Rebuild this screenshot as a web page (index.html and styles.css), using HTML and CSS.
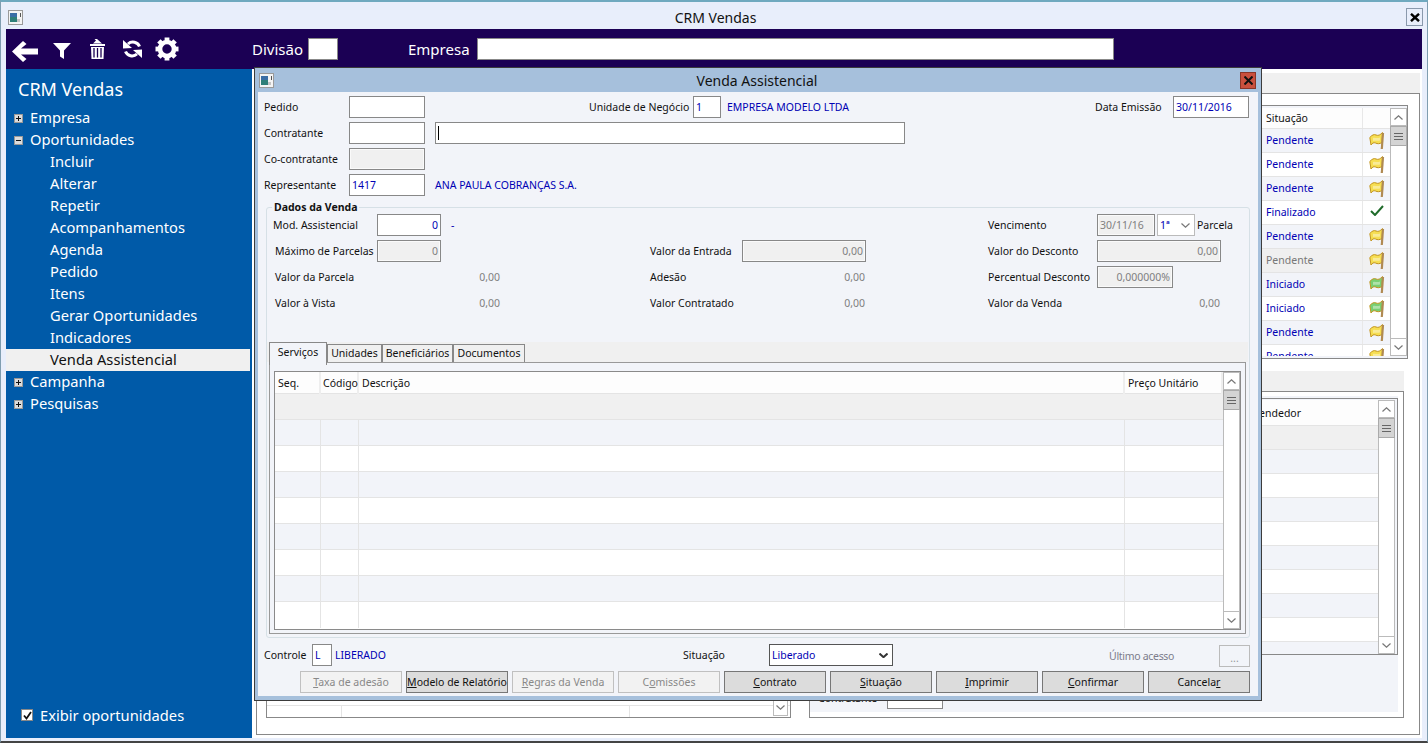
FILE: index.html
```html
<!DOCTYPE html>
<html lang="pt-BR">
<head>
    <meta charset="UTF-8">
    <title>CRM Vendas</title>
    <link rel="stylesheet" href="styles.css">
</head>
<body>

    <!-- Shared icons -->
    <svg class="defs" width="0" height="0">
        <symbol id="win-icon" viewBox="0 0 15 15">
            <rect x="0.5" y="0.5" width="14" height="14" fill="#f4f4f4" stroke="#9a9a9a"/>
            <rect x="2" y="3" width="7" height="9" fill="#2f7f78"/>
            <rect x="2" y="3" width="7" height="4" fill="#3a6ea5"/>
            <rect x="9" y="9" width="3" height="3" fill="#c4c4c4"/>
            <rect x="12" y="3" width="1" height="4" fill="#555"/>
        </symbol>
        <symbol id="flag" viewBox="0 0 16 18">
            <path d="M0.8 5.5 C3 3 5 2 7 3 C9.5 4 11 3 13.5 0.5 L13 10.5 C10.5 12 8.5 12 6.5 11 C4.5 10.3 3.5 11 2 13 Z" fill="currentColor" stroke="#c2941f"/>
            <path d="M4 6 C6 5 8 7 11 5.5 L11 8.5 C8 9.5 6 8 4 9 Z" fill="#fff" opacity="0.4"/>
            <path d="M14 1 L12.8 17" stroke="#b08a52" stroke-width="2.2"/>
        </symbol>
        <symbol id="up" viewBox="0 0 9 5">
            <path d="M0.5 4.5 L4.5 0.8 L8.5 4.5" fill="none" stroke="#777" stroke-width="1.2"/>
        </symbol>
        <symbol id="down" viewBox="0 0 9 5">
            <path d="M0.5 0.5 L4.5 4.2 L8.5 0.5" fill="none" stroke="#777" stroke-width="1.2"/>
        </symbol>
        <symbol id="down-bold" viewBox="0 0 9 5">
            <path d="M0.5 0.5 L4.5 4.2 L8.5 0.5" fill="none" stroke="#333" stroke-width="2"/>
        </symbol>
    </svg>

    <div class="app">
        <!-- Window title -->
        <div class="titlebar">
            <svg class="win-icon"><use href="#win-icon"/></svg>
            <span class="titlebar-text">CRM Vendas</span>
            <div class="close-plain">
                <svg width="10" height="9" viewBox="0 0 10 9"><path d="M1 0.8 L9 8.2 M9 0.8 L1 8.2" stroke="#000" stroke-width="2.4"/></svg>
            </div>
        </div>

        <!-- Toolbar -->
        <div class="toolbar">
            <div class="tool-icons">
                <svg class="ic-back" width="26" height="21" viewBox="0 0 26 21"><path d="M11 0 L14.5 3 L9 7.5 L26 7.5 L26 13.5 L9 13.5 L14.5 18 L11 21 L0 10.5 Z" fill="#fff"/></svg>
                <svg class="ic-filter" width="18" height="16" viewBox="0 0 18 16"><path d="M0 0 L18 0 L11 7.5 L11 16 L7 13.5 L7 7.5 Z" fill="#fff"/></svg>
                <svg class="ic-trash" width="15" height="20" viewBox="0 0 15 20">
                    <path d="M0 5 L15 5 L15 7 L0 7 Z" fill="#fff"/>
                    <path d="M3 4.5 L6 1.5 L4.5 0 L7 0 L12 4.5 Z" fill="#fff"/>
                    <path d="M1 8 L14 8 L13.5 20 L1.5 20 Z" fill="#fff"/>
                    <path d="M4 9 L4 18.5 M7.5 9 L7.5 18.5 M11 9 L11 18.5" stroke="#1b0054" stroke-width="1.3"/>
                </svg>
                <svg class="ic-refresh" width="19" height="18" viewBox="0 0 19 18">
                    <path d="M16.5 6.5 A7 6.5 0 0 0 5 4" fill="none" stroke="#fff" stroke-width="3"/>
                    <path d="M0 0 L9 8 L0 8.5 Z" fill="#fff"/>
                    <path d="M2.5 11.5 A7 6.5 0 0 0 14 14" fill="none" stroke="#fff" stroke-width="3"/>
                    <path d="M19 18 L10 10 L19 9.5 Z" fill="#fff"/>
                </svg>
                <svg class="ic-gear" width="24" height="24" viewBox="0 0 24 24">
                    <circle cx="12" cy="12" r="7" fill="none" stroke="#fff" stroke-width="4.6"/>
                    <g fill="#fff">
                        <rect x="9.6" y="0.5" width="4.8" height="5"/>
                        <rect x="9.6" y="18.5" width="4.8" height="5"/>
                        <rect x="0.5" y="9.6" width="5" height="4.8"/>
                        <rect x="18.5" y="9.6" width="5" height="4.8"/>
                        <rect x="9.6" y="0.5" width="4.8" height="5" transform="rotate(45 12 12)"/>
                        <rect x="9.6" y="18.5" width="4.8" height="5" transform="rotate(45 12 12)"/>
                        <rect x="0.5" y="9.6" width="5" height="4.8" transform="rotate(45 12 12)"/>
                        <rect x="18.5" y="9.6" width="5" height="4.8" transform="rotate(45 12 12)"/>
                    </g>
                </svg>
            </div>
            <span class="tool-label">Divisão</span>
            <div class="tool-input tool-input-div"></div>
            <span class="tool-label tool-label-emp">Empresa</span>
            <div class="tool-input tool-input-emp"></div>
        </div>

        <div class="workspace">
            <!-- Side menu -->
            <nav class="sidebar">
                <div class="side-title">CRM Vendas</div>
                <div class="menu-item"><span class="exp plus"></span>Empresa</div>
                <div class="menu-item"><span class="exp"></span>Oportunidades</div>
                <div class="menu-item sub">Incluir</div>
                <div class="menu-item sub">Alterar</div>
                <div class="menu-item sub">Repetir</div>
                <div class="menu-item sub">Acompanhamentos</div>
                <div class="menu-item sub">Agenda</div>
                <div class="menu-item sub">Pedido</div>
                <div class="menu-item sub">Itens</div>
                <div class="menu-item sub">Gerar Oportunidades</div>
                <div class="menu-item sub">Indicadores</div>
                <div class="menu-item sub active">Venda Assistencial</div>
                <div class="menu-item"><span class="exp plus"></span>Campanha</div>
                <div class="menu-item"><span class="exp plus"></span>Pesquisas</div>
                <label class="side-check">
                    <span class="checkbox">
                        <svg width="9" height="9" viewBox="0 0 9 9"><path d="M1 4.5 L3.5 7.5 L8 1" fill="none" stroke="#111" stroke-width="1.8"/></svg>
                    </span>
                    Exibir oportunidades
                </label>
            </nav>

            <!-- Screen behind the dialog -->
            <main class="main">
                <div class="band"></div>
                <div class="main-panel">
                    <div class="list list-top">
                        <div class="list-body">
                            <div class="lrow head"><span class="c-sit">Situação</span><span class="c-flag"></span></div>
                            <div class="lrow alt"><span class="c-sit">Pendente</span><span class="c-flag"><svg class="flag yellow"><use href="#flag"/></svg></span></div>
                            <div class="lrow"><span class="c-sit">Pendente</span><span class="c-flag"><svg class="flag yellow"><use href="#flag"/></svg></span></div>
                            <div class="lrow alt"><span class="c-sit">Pendente</span><span class="c-flag"><svg class="flag yellow"><use href="#flag"/></svg></span></div>
                            <div class="lrow"><span class="c-sit">Finalizado</span><span class="c-flag"><svg class="check" width="14" height="11" viewBox="0 0 14 11"><path d="M1 6 L5 10 L13 1" fill="none" stroke="#1f6b2a" stroke-width="2"/></svg></span></div>
                            <div class="lrow alt"><span class="c-sit">Pendente</span><span class="c-flag"><svg class="flag yellow"><use href="#flag"/></svg></span></div>
                            <div class="lrow sel"><span class="c-sit">Pendente</span><span class="c-flag"><svg class="flag yellow"><use href="#flag"/></svg></span></div>
                            <div class="lrow alt"><span class="c-sit">Iniciado</span><span class="c-flag"><svg class="flag green"><use href="#flag"/></svg></span></div>
                            <div class="lrow"><span class="c-sit">Iniciado</span><span class="c-flag"><svg class="flag green"><use href="#flag"/></svg></span></div>
                            <div class="lrow alt"><span class="c-sit">Pendente</span><span class="c-flag"><svg class="flag yellow"><use href="#flag"/></svg></span></div>
                            <div class="lrow"><span class="c-sit">Pendente</span><span class="c-flag"><svg class="flag yellow"><use href="#flag"/></svg></span></div>
                        </div>
                        <div class="scroll">
                            <div class="sb-btn"><svg width="9" height="5"><use href="#up"/></svg></div>
                            <div class="sb-thumb"><i></i><i></i><i></i></div>
                            <div class="sb-track"></div>
                            <div class="sb-btn"><svg width="9" height="5"><use href="#down"/></svg></div>
                        </div>
                    </div>
                    <div class="lower">
                        <div class="lower-left">
                            <div class="band"></div>
                            <div class="sub-panel sub-panel-left">
                                <div class="left-cols">
                                    <span></span><span></span><span></span>
                                </div>
                                <div class="corner-btn"><svg width="9" height="5"><use href="#down"/></svg></div>
                            </div>
                        </div>
                        <div class="lower-right">
                            <div class="band"></div>
                            <div class="sub-panel">
                                <div class="sub-fill">
                                    <div class="list list-low">
                                        <div class="list-body">
                                            <div class="lrow2 head"><span class="c-vend">Vendedor</span></div>
                                            <div class="lrow2 sel"></div>
                                            <div class="lrow2 alt"></div>
                                            <div class="lrow2"></div>
                                            <div class="lrow2 alt"></div>
                                            <div class="lrow2"></div>
                                            <div class="lrow2 alt"></div>
                                            <div class="lrow2"></div>
                                            <div class="lrow2 alt"></div>
                                            <div class="lrow2"></div>
                                            <div class="lrow2 alt"></div>
                                        </div>
                                        <div class="scroll">
                                            <div class="sb-btn"><svg width="9" height="5"><use href="#up"/></svg></div>
                                            <div class="sb-thumb"><i></i><i></i><i></i></div>
                                            <div class="sb-track"></div>
                                            <div class="sb-btn"><svg width="9" height="5"><use href="#down"/></svg></div>
                                        </div>
                                    </div>
                                    <div class="low-form">
                                        <span class="low-label">Contratante</span>
                                        <div class="low-input"></div>
                                    </div>
                                </div>
                            </div>
                        </div>
                    </div>
                </div>
            </main>
        </div>

        <!-- Venda Assistencial dialog -->
        <section class="dialog">
            <div class="dialog-title">
                <svg class="win-icon"><use href="#win-icon"/></svg>
                <span class="dialog-title-text">Venda Assistencial</span>
                <div class="close-red">
                    <svg width="9" height="9" viewBox="0 0 9 9"><path d="M0.5 0.5 L8.5 8.5 M8.5 0.5 L0.5 8.5" stroke="#111" stroke-width="2"/></svg>
                </div>
            </div>
            <div class="dialog-body">
                <div class="head-form">
                    <span class="lbl">Pedido</span>
                    <div class="field"></div>
                    <span class="lbl hf-unit-label">Unidade de Negócio</span>
                    <div class="field hf-unit">1</div>
                    <span class="val-blue hf-unit-name">EMPRESA MODELO LTDA</span>
                    <span class="lbl hf-date-label">Data Emissão</span>
                    <div class="field hf-date">30/11/2016</div>

                    <span class="lbl hf-start">Contratante</span>
                    <div class="field"></div>
                    <div class="field hf-wide"><i class="caret"></i></div>

                    <span class="lbl hf-start">Co-contratante</span>
                    <div class="field off"></div>

                    <span class="lbl hf-start">Representante</span>
                    <div class="field">1417</div>
                    <span class="val-blue hf-wide">ANA PAULA COBRANÇAS S.A.</span>
                </div>

                <fieldset class="group">
                    <legend>Dados da Venda</legend>
                    <div class="sale-grid">
                        <span class="lbl">Mod. Assistencial</span>
                        <div class="field right">0</div>
                        <span class="dash">-</span>
                        <span class="lbl sg-right-label">Vencimento</span>
                        <div class="sg-right-ctrl sg-flex">
                            <div class="field off w-date">30/11/16</div>
                            <div class="select w-parc">1ª<svg width="9" height="5"><use href="#down"/></svg></div>
                            <span class="lbl">Parcela</span>
                        </div>

                        <span class="lbl in2">Máximo de Parcelas</span>
                        <div class="field off right">0</div>
                        <span class="lbl sg-mid-label">Valor da Entrada</span>
                        <div class="field off right">0,00</div>
                        <span class="lbl sg-right-label">Valor do Desconto</span>
                        <div class="field off right sg-right-ctrl">0,00</div>

                        <span class="lbl in2">Valor da Parcela</span>
                        <span class="amount sg-first-amount">0,00</span>
                        <span class="lbl sg-mid-label">Adesão</span>
                        <span class="amount">0,00</span>
                        <span class="lbl sg-right-label">Percentual Desconto</span>
                        <div class="sg-right-ctrl sg-flex"><div class="field off right w-pct">0,000000%</div></div>

                        <span class="lbl in2">Valor à Vista</span>
                        <span class="amount sg-first-amount">0,00</span>
                        <span class="lbl sg-mid-label">Valor Contratado</span>
                        <span class="amount">0,00</span>
                        <span class="lbl sg-right-label">Valor da Venda</span>
                        <span class="amount sg-right-ctrl">0,00</span>
                    </div>

                    <div class="tabbar">
                        <div class="tab tab-srv active">Serviços</div>
                        <div class="tab tab-uni">Unidades</div>
                        <div class="tab tab-ben">Beneficiários</div>
                        <div class="tab tab-doc">Documentos</div>
                    </div>
                    <div class="tab-panel">
                        <div class="items">
                            <div class="items-body">
                                <div class="irow ihead">
                                    <span>Seq.</span><span>Código</span><span>Descrição</span><span>Preço Unitário</span>
                                </div>
                                <div class="irow isel"></div>
                                <div class="irow alt"><span></span><span></span><span></span><span></span></div>
                                <div class="irow"><span></span><span></span><span></span><span></span></div>
                                <div class="irow alt"><span></span><span></span><span></span><span></span></div>
                                <div class="irow"><span></span><span></span><span></span><span></span></div>
                                <div class="irow alt"><span></span><span></span><span></span><span></span></div>
                                <div class="irow"><span></span><span></span><span></span><span></span></div>
                                <div class="irow alt"><span></span><span></span><span></span><span></span></div>
                                <div class="irow last"><span></span><span></span><span></span><span></span></div>
                            </div>
                            <div class="scroll">
                                <div class="sb-btn"><svg width="9" height="5"><use href="#up"/></svg></div>
                                <div class="sb-thumb"><i></i><i></i><i></i></div>
                                <div class="sb-track"></div>
                                <div class="sb-btn"><svg width="9" height="5"><use href="#down"/></svg></div>
                            </div>
                        </div>
                    </div>
                </fieldset>

                <div class="status-row">
                    <span class="lbl">Controle</span>
                    <div class="field">L</div>
                    <span class="val-blue st-name">LIBERADO</span>
                    <span class="lbl">Situação</span>
                    <div class="select strong">Liberado<svg width="9" height="5"><use href="#down-bold"/></svg></div>
                    <span class="lbl muted st-last">Último acesso</span>
                    <div class="dots">...</div>
                </div>

                <div class="actions">
                    <button class="btn" disabled><u>T</u>axa de adesão</button>
                    <button class="btn"><u>M</u>odelo de Relatório</button>
                    <button class="btn" disabled><u>R</u>egras da Venda</button>
                    <button class="btn" disabled>C<u>o</u>missões</button>
                    <button class="btn"><u>C</u>ontrato</button>
                    <button class="btn"><u>S</u>ituação</button>
                    <button class="btn"><u>I</u>mprimir</button>
                    <button class="btn"><u>C</u>onfirmar</button>
                    <button class="btn">Cancela<u>r</u></button>
                </div>
            </div>
        </section>
    </div>

</body>
</html>
```

FILE: styles.css
```css
/* Reset styles */
* {
    margin: 0;
    padding: 0;
    box-sizing: border-box;
}

html, body {
    width: 1428px;
    height: 743px;
    overflow: hidden;
}

body {
    font-family: "Noto Sans", sans-serif;
    font-size: 10.5px;
    color: #111;
    background: #e8eefb;
}

.defs {
    position: absolute;
}

.app {
    position: relative;
    width: 1428px;
    height: 743px;
    padding: 3px 5px 0;
    background: #e8eefb;
    border: 1px solid #7f9db0;
    border-top: 2px solid #6fa9bf;
    border-bottom: 2px solid #444;
    display: flex;
    flex-direction: column;
    overflow: hidden;
}

/* Window title */
.titlebar {
    height: 24px;
    flex: none;
    display: flex;
    align-items: center;
    position: relative;
}

.titlebar-text {
    position: absolute;
    left: 0;
    right: 0;
    padding-left: 3px;
    text-align: center;
    font-size: 14px;
}

.win-icon {
    width: 15px;
    height: 15px;
    margin-left: 2px;
}

.close-plain {
    position: absolute;
    right: -1px;
    top: 3px;
    width: 17px;
    height: 18px;
    border: 1px solid #8a99ad;
    display: flex;
    align-items: center;
    justify-content: center;
}

/* Toolbar */
.toolbar {
    height: 40px;
    flex: none;
    background: #1b0054;
    display: flex;
    align-items: center;
    color: #fff;
}

.tool-icons {
    width: 246px;
    padding-left: 6px;
    display: flex;
    align-items: center;
}

.ic-back {
    margin-top: 4px;
}

.ic-filter {
    margin: 4px 0 0 15px;
}

.ic-trash {
    margin-left: 19px;
}

.ic-refresh {
    margin-left: 18px;
}

.ic-gear {
    margin-left: 13px;
}

.tool-label {
    font-size: 15px;
    width: 56px;
}

.tool-label-emp {
    width: 69px;
    margin-left: 70px;
}

.tool-input {
    height: 22px;
    background: #fff;
    border: 1px solid #888;
}

.tool-input-div {
    width: 30px;
}

.tool-input-emp {
    width: 637px;
}

/* Workspace */
.workspace {
    flex: none;
    height: 669px;
    display: flex;
}

.sidebar {
    width: 246px;
    flex: none;
    background: #005aa8;
    color: #fff;
    padding-top: 8px;
    display: flex;
    flex-direction: column;
    font-size: 14.7px;
}

.side-title {
    font-size: 18px;
    height: 24px;
    line-height: 24px;
    padding-left: 12px;
    margin-bottom: 6px;
}

.menu-item {
    height: 22px;
    line-height: 20px;
    padding: 0 0 2px 8px;
    display: flex;
    align-items: center;
    white-space: nowrap;
}

.menu-item.sub {
    padding-left: 44px;
}

.menu-item.active {
    background: #f0f0f0;
    color: #111;
    margin-right: 2px;
}

/* Tree expander: a minus, with a vertical stroke added when collapsed */
.exp {
    width: 9px;
    height: 9px;
    margin: 2px 7px 0 0;
    background: linear-gradient(#111, #111) center / 5px 1px no-repeat, #dcdcdc;
    border: 1px solid #999;
}

.exp.plus {
    background:
        linear-gradient(#111, #111) center / 5px 1px no-repeat,
        linear-gradient(#111, #111) center / 1px 5px no-repeat,
        #dcdcdc;
}

.side-check {
    margin-top: auto;
    margin-bottom: 13px;
    padding-left: 15px;
    display: flex;
    align-items: center;
    gap: 7px;
}

.checkbox {
    width: 12px;
    height: 12px;
    background: #fff;
    border: 1px solid #888;
    display: flex;
    align-items: center;
    justify-content: center;
}

/* Screen behind the dialog */
.main {
    flex: 1;
    background: #fff;
    padding: 4px 2px 3px 4px;
    display: flex;
    flex-direction: column;
}

.band {
    height: 20px;
    flex: none;
    background: #f0f0f0;
}

.main-panel {
    flex: 1;
    border: 1px solid #888;
    padding: 11px 11px 16px 9px;
    display: flex;
    flex-direction: column;
}

.list {
    display: flex;
    border: 1px solid #888;
    background: #f2f4f9;
    overflow: hidden;
}

.list-top {
    height: 254px;
    flex: none;
    padding: 2px 0 2px 2px;
}

.list-body {
    flex: 1;
    overflow: hidden;
}

.lrow {
    height: 24px;
    display: flex;
    justify-content: flex-end;
    align-items: center;
    background: #fff;
    border-bottom: 1px solid #e4e4e4;
    color: #0000b4;
}

.lrow.head {
    height: 21px;
    background: #fdfdfd;
    color: #111;
}

.lrow.alt,
.lrow2.alt {
    background: #f2f4f9;
}

.lrow.sel {
    background: #f0f0f0;
    color: #777;
}

.c-sit {
    width: 100px;
    padding: 0 0 2px 3px;
    border-right: 1px solid #e8e8e8;
    height: 100%;
    display: flex;
    align-items: center;
}

.lrow.head .c-sit {
    padding-bottom: 0;
}

.c-flag {
    width: 27px;
    height: 100%;
    display: flex;
    align-items: center;
    justify-content: center;
}

.flag {
    width: 16px;
    height: 18px;
}

.check {
    margin-bottom: 4px;
}

.flag.yellow {
    color: #f6de52;
}

.flag.green {
    color: #79cf72;
}

/* Scroll bars */
.scroll {
    width: 17px;
    flex: none;
    display: flex;
    flex-direction: column;
    background: #fff;
    border-left: 1px solid #bbb;
    border-right: 1px solid #bbb;
}

.sb-btn {
    height: 18px;
    flex: none;
    background: #fff;
    border-top: 1px solid #bbb;
    border-bottom: 1px solid #bbb;
    display: flex;
    align-items: center;
    justify-content: center;
}

.sb-thumb {
    height: 20px;
    flex: none;
    background: #d4d4d4;
    border: 1px solid #aaa;
    margin: 0 -1px;
    display: flex;
    flex-direction: column;
    align-items: center;
    justify-content: center;
    gap: 2px;
}

.sb-thumb i {
    width: 9px;
    height: 1px;
    background: #666;
}

.sb-track {
    flex: 1;
}

/* Lower half of the screen */
.lower {
    flex: 1;
    margin-top: 12px;
    display: flex;
    gap: 18px;
}

.lower-left {
    width: 525px;
    display: flex;
    flex-direction: column;
}

.lower-right {
    width: 595px;
    display: flex;
    flex-direction: column;
}

.sub-panel {
    flex: 1;
    border: 1px solid #888;
    padding-bottom: 5px;
    display: flex;
    flex-direction: column;
}

.sub-panel-left {
    justify-content: flex-end;
    position: relative;
    padding-bottom: 0;
}

.left-cols {
    height: 12px;
    border-top: 1px solid #e4e4e4;
    display: grid;
    grid-template-columns: 75px 288px 1fr;
}

.left-cols span {
    border-right: 1px solid #e4e4e4;
}

.left-cols span:last-child {
    border-right: none;
}

.corner-btn {
    position: absolute;
    right: 2px;
    bottom: 1px;
    width: 15px;
    height: 17px;
    background: #fff;
    border: 1px solid #bbb;
    display: flex;
    align-items: center;
    justify-content: center;
}

.sub-fill {
    flex: 1;
    background: #f2f4f9;
    margin: 4px 5px 0 0;
    padding: 2px 0 0;
    display: flex;
    flex-direction: column;
}

.list-low {
    height: 257px;
    flex: none;
    background: #f2f4f9;
    padding: 1px 2px 0 2px;
}

.lrow2 {
    height: 24px;
    background: #fff;
    border-bottom: 1px solid #e4e4e4;
}

.lrow2.head {
    height: 26px;
    background: #fdfdfd;
    padding-left: 440px;
    line-height: 26px;
}

.lrow2.sel {
    background: #f0f0f0;
}

.low-form {
    margin-top: auto;
    display: flex;
    align-items: center;
    padding-left: 8px;
    height: 22px;
    margin-bottom: 3px;
}

.low-label {
    width: 69px;
}

.low-input {
    width: 56px;
    height: 22px;
    background: #fff;
    border: 1px solid #888;
}

/* Dialog */
.dialog {
    position: absolute;
    left: 253px;
    top: 65px;
    width: 1008px;
    height: 634px;
    border: 1px solid #3c3c3c;
    background: #a6c0dc;
    display: flex;
    flex-direction: column;
    padding: 0 3px 4px;
}

.dialog-title {
    height: 24px;
    flex: none;
    position: relative;
    display: flex;
    align-items: center;
}

.dialog-title-text {
    position: absolute;
    left: 0;
    right: 2px;
    text-align: center;
    font-size: 14px;
}

.dialog-title .win-icon {
    margin-left: 1px;
}

.close-red {
    position: absolute;
    right: 2px;
    top: 4px;
    width: 16px;
    height: 17px;
    background: #c9503e;
    border: 1px solid #8a3528;
    display: flex;
    align-items: center;
    justify-content: center;
}

.dialog-body {
    flex: 1;
    background: #f2f4f9;
    padding-top: 4px;
    display: flex;
    flex-direction: column;
}

.lbl {
    white-space: nowrap;
    display: flex;
    align-items: center;
}

.lbl.muted {
    color: #7c7c8c;
}

.val-blue {
    color: #0000b4;
    white-space: nowrap;
    display: flex;
    align-items: center;
}

.field {
    height: 22px;
    background: #fff;
    border: 1px solid #888;
    color: #0000b4;
    padding: 0 2px;
    line-height: 20px;
    white-space: nowrap;
}

.field.off {
    background: #f0f0f0;
    box-shadow: inset 0 0 0 1px #fafafa;
    color: #808080;
}

.field.right {
    text-align: right;
}

.caret {
    display: inline-block;
    width: 1px;
    height: 14px;
    background: #000;
    margin-top: 3px;
    vertical-align: top;
}

.select {
    height: 22px;
    background: #fff;
    border: 1px solid #888;
    color: #0000b4;
    padding: 1px 4px 0 2px;
    line-height: 19px;
    display: flex;
    align-items: center;
    justify-content: space-between;
}

.select.strong {
    border-color: #555;
}

/* Header form */
.head-form {
    margin-left: 6px;
    display: grid;
    grid-template-columns: 85px 76px 10px 154px 104px 28px 6px 178px 190px 78px 76px;
    grid-auto-rows: 22px;
    row-gap: 4px;
}

.hf-start {
    grid-column: 1;
}

.hf-unit-label {
    grid-column: 5;
}

.hf-unit {
    grid-column: 6;
}

.hf-unit-name {
    grid-column: 8 / 9;
}

.hf-date-label {
    grid-column: 10;
}

.hf-date {
    grid-column: 11;
}

.hf-wide {
    grid-column: 4 / 9;
}

/* Sale data group */
.group {
    margin: 4px 8px 0;
    border: 1px solid #d6e0e6;
    border-radius: 3px;
    height: 438px;
    min-width: 0;
}

.group legend {
    margin-left: 5px;
    padding: 0 2px;
    font-weight: bold;
    line-height: 14px;
}

.sale-grid {
    margin-left: 6px;
    display: grid;
    grid-template-columns: 104px 64px 209px 92px 124px 122px 109px 124px;
    grid-auto-rows: 22px;
    row-gap: 4px;
}

.in2 {
    padding-left: 2px;
}

.dash {
    padding-left: 10px;
    color: #0000b4;
    display: flex;
    align-items: center;
}

.sg-mid-label {
    grid-column: 4;
}

.sg-right-label {
    grid-column: 7;
}

.sg-right-ctrl {
    grid-column: 8;
}

.sg-flex {
    display: flex;
    gap: 2px;
}

.sg-first-amount {
    grid-column: 2 / 4;
    width: 124px;
}

.amount {
    color: #808080;
    text-align: right;
    line-height: 22px;
    padding-right: 1px;
}

.w-date {
    width: 58px;
    flex: none;
}

.w-parc {
    width: 38px;
    flex: none;
    border-color: #bbb;
}

.w-pct {
    width: 76px;
    flex: none;
}

/* Tabs */
.tabbar {
    margin-top: 28px;
    height: 20px;
    background: #f0f0f0;
    padding-left: 2px;
    display: flex;
    margin-right: 1px;
}

.tab {
    margin-top: 2px;
    height: 18px;
    line-height: 16px;
    text-align: center;
    background: #f0f0f0;
    border: 1px solid #888;
    border-bottom: none;
    white-space: nowrap;
}

.tab-srv {
    width: 58px;
}

.tab-uni {
    width: 55px;
}

.tab-ben {
    width: 71px;
}

.tab-doc {
    width: 72px;
}

.tab.active {
    margin-top: 0;
    height: 23px;
    background: #f2f4f9;
    position: relative;
    z-index: 1;
    line-height: 18px;
}

.tab-panel {
    margin: 0 3px 0 2px;
    height: 272px;
    border: 1px solid #999;
    background: #f2f4f9;
    padding: 8px 4px 3px;
}

.items {
    height: 259px;
    border: 1px solid #8a8a8a;
    display: flex;
    background: #fff;
}

.items-body {
    flex: 1;
    overflow: hidden;
}

.irow {
    height: 26px;
    display: grid;
    grid-template-columns: 46px 38px 766px 98px;
    background: #fff;
    border-bottom: 1px solid #e4e4e4;
}

.irow span {
    border-right: 1px solid #e4e4e4;
}

.irow span:last-child {
    border-right: none;
}

.irow.alt {
    background: #f2f4f9;
}

.irow.ihead {
    height: 22px;
    background: #fdfdfd;
    line-height: 22px;
}

.irow.ihead span {
    padding-left: 3px;
    border-right: 2px solid #eee;
}

.irow.ihead span:nth-child(2) {
    padding-left: 2px;
}

.irow.isel {
    background: #f0f0f0;
    display: block;
}

.irow.last {
    border-bottom: none;
}

/* Bottom of the dialog */
.status-row {
    margin: 6px 8px 0 6px;
    display: grid;
    grid-template-columns: 48px 20px 351px 86px 124px 216px 110px 31px;
    grid-auto-rows: 22px;
}

.st-name {
    padding-left: 3px;
}

.st-last {
    grid-column: 7;
    padding-top: 2px;
    letter-spacing: -0.3px;
}

.dots {
    border: 1px solid #bbb;
    color: #999;
    text-align: center;
    line-height: 25px;
    margin-top: 1px;
    height: 22px;
}

.actions {
    margin: 5px 8px 0 0;
    display: flex;
    justify-content: flex-end;
    gap: 4px;
}

.btn {
    width: 102px;
    height: 22px;
    flex: none;
    font: 10.5px "Noto Sans", sans-serif;
    color: #111;
    background: #dcdcdc;
    border: 1px solid #777;
    white-space: nowrap;
}

.btn:disabled {
    background: #f2f2f2;
    border-color: #c0c0c0;
    color: #888;
}
```
